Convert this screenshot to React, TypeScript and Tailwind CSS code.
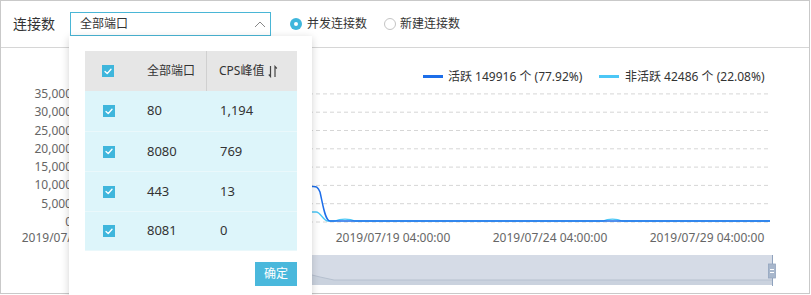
import React from "react";

const font = "font-['Noto_Sans','Noto_Sans_CJK_SC',sans-serif]";

function Check() {
  return (
    <span className="w-[12px] h-[12px] bg-[#3fb6dc] flex items-center justify-center">
      <svg width="8" height="7" viewBox="0 0 8 7">
        <path d="M1 3.6 L3.2 5.6 L7 1.2" fill="none" stroke="#fff" strokeWidth="1.4" strokeLinecap="round" strokeLinejoin="round" />
      </svg>
    </span>
  );
}

const rows = [
  ["80", "1,194"],
  ["8080", "769"],
  ["443", "13"],
  ["8081", "0"],
];

function Chart() {
  const yTicks = ["0", "5,000", "10,000", "15,000", "20,000", "25,000", "30,000", "35,000"];
  const zero = 222;
  const step = 18.3;
  const xLabels = [
    { x: 79, t: "2019/07/09 04:00:00" },
    { x: 393, t: "2019/07/19 04:00:00" },
    { x: 550, t: "2019/07/24 04:00:00" },
    { x: 707, t: "2019/07/29 04:00:00" },
  ];
  return (
    <svg width="808" height="245" viewBox="1 48 808 245" className="block">
      <line x1="423" y1="76.5" x2="443" y2="76.5" stroke="#1d6ee9" strokeWidth="3" />
      <text x="448" y="81" fontSize="12" fill="#333">活跃 149916 个 (77.92%)</text>
      <line x1="599" y1="76.5" x2="619" y2="76.5" stroke="#4cc7f6" strokeWidth="3" />
      <text x="625" y="81" fontSize="12" fill="#333">非活跃 42486 个 (22.08%)</text>

      {yTicks.map((t, i) => {
        const y = zero - i * step;
        return (
          <g key={t}>
            <line x1="78" y1={y} x2="770" y2={y} stroke="#d6d6d6" strokeDasharray="4 3" />
            <text x="72" y={y + 4} fontSize="12" fill="#666" textAnchor="end">{t}</text>
          </g>
        );
      })}
      {xLabels.map((l) => (
        <text key={l.t} x={l.x} y="242" fontSize="12" fill="#666" textAnchor="middle">{l.t}</text>
      ))}

      <path
        d="M79 221 L270 221 C285 221 292 212 306 212 L316 212 C321 212 323 221 328 221 L335 221 C340 218.5 350 218.5 355 221 L603 221 C608 218.5 617 218.5 622 221 L770 221"
        fill="none"
        stroke="#4cc7f6"
        strokeWidth="1.3"
      />
      <path
        d="M79 221 L260 221 C280 221 290 186 312 186.5 C316 186 318 187 320 192 C323 205 325 221 330 221 L770 221"
        fill="none"
        stroke="#1d6ee9"
        strokeWidth="1.5"
      />

      <rect x="79" y="255" width="693" height="30" fill="#d5dbe6" />
      <path d="M79 285 L79 280 L290 280 C300 280 305 275 312 275 L320 277 L334 280 L772 280 L772 285 Z" fill="#cad2de" />
      <path d="M79 280 L290 280 C300 280 305 275 312 275 L320 277 L334 280 L772 280" fill="none" stroke="#b6c0cf" strokeWidth="1" />
      <line x1="772.5" y1="255" x2="772.5" y2="286" stroke="#8fa2bd" strokeWidth="1" />
      <rect x="768.5" y="264" width="7" height="14" fill="#a8b7cc" stroke="#93a5bf" strokeWidth="0.8" />
      <line x1="770" y1="269.5" x2="774" y2="269.5" stroke="#fff" strokeWidth="1" />
      <line x1="770" y1="272.5" x2="774" y2="272.5" stroke="#fff" strokeWidth="1" />
    </svg>
  );
}

export default function App() {
  return (
    <div className={`w-[811px] h-[295px] bg-white relative overflow-hidden ${font} text-[#333]`}>
      <div className="w-[810px] h-[294px] border border-[#c9c9c9] flex flex-col">
        <div className="h-[47px] shrink-0 border-b border-[#d6d6d6] flex items-center pl-[12px]">
          <span className="text-[14px] w-[57px] leading-none">连接数</span>
          <div className="w-[201px] h-[24px] border border-[#4ab6d6] flex items-center justify-between pl-[9px] pr-[4px]">
            <span className="text-[12px] leading-none">全部端口</span>
            <svg width="12" height="7" viewBox="0 0 12 7">
              <path d="M1 6 L6 1 L11 6" fill="none" stroke="#888" strokeWidth="1" />
            </svg>
          </div>
          <div className="flex items-center ml-[19px]">
            <span className="w-[12px] h-[12px] rounded-full bg-[#3fb6dc] flex items-center justify-center">
              <span className="w-[4px] h-[4px] rounded-full bg-white" />
            </span>
            <span className="text-[12px] ml-[5px] leading-none">并发连接数</span>
          </div>
          <div className="flex items-center ml-[17px]">
            <span className="w-[12px] h-[12px] rounded-full border border-[#c4c4c4] bg-white" />
            <span className="text-[12px] ml-[4px] leading-none">新建连接数</span>
          </div>
        </div>
        <Chart />
      </div>

      <div className="absolute left-[69px] top-[36px] w-[243px] h-[270px] bg-white shadow-[0_2px_8px_rgba(0,0,0,0.18)] pl-[16px] pt-[15px]">
        <div className="w-[212px] flex flex-col">
          <div className="h-[40px] bg-[#e6e6e6] flex items-center">
            <div className="w-[44px] flex justify-center pl-[1px]"><Check /></div>
            <div className="w-[78px] h-full flex items-center pl-[18px] text-[12px] border-r border-[#d0d0d0]">全部端口</div>
            <div className="flex-1 h-full flex items-center pl-[12px] text-[12px]">
              <span>CPS峰值</span>
              <svg width="10" height="13" viewBox="0 0 10 13" className="ml-[4px]">
                <path d="M2.5 1 V11.5 L0.8 9.5" fill="none" stroke="#444" strokeWidth="1.2" />
                <path d="M7 12 V1.5 L8.8 3.5" fill="none" stroke="#444" strokeWidth="1.2" />
              </svg>
            </div>
          </div>
          {rows.map(([p, c], i) => (
            <div
              key={p}
              className={`h-[40px] bg-[#ddf5fa] flex items-center text-[13px] ${i > 0 ? "border-t border-[#eaf8fb]" : ""} ${i === rows.length - 1 ? "border-b border-[#e2ecee]" : ""}`}
            >
              <div className="w-[44px] flex justify-center pl-[3px]"><Check /></div>
              <div className="w-[78px] pl-[18px]">{p}</div>
              <div className="flex-1 pl-[13px]">{c}</div>
            </div>
          ))}
        </div>
        <div className="w-[212px] flex justify-end mt-[11px]">
          <button className="w-[42px] h-[24px] bg-[#4ab8dc] text-white text-[12px] flex items-center justify-center">确定</button>
        </div>
      </div>
    </div>
  );
}
